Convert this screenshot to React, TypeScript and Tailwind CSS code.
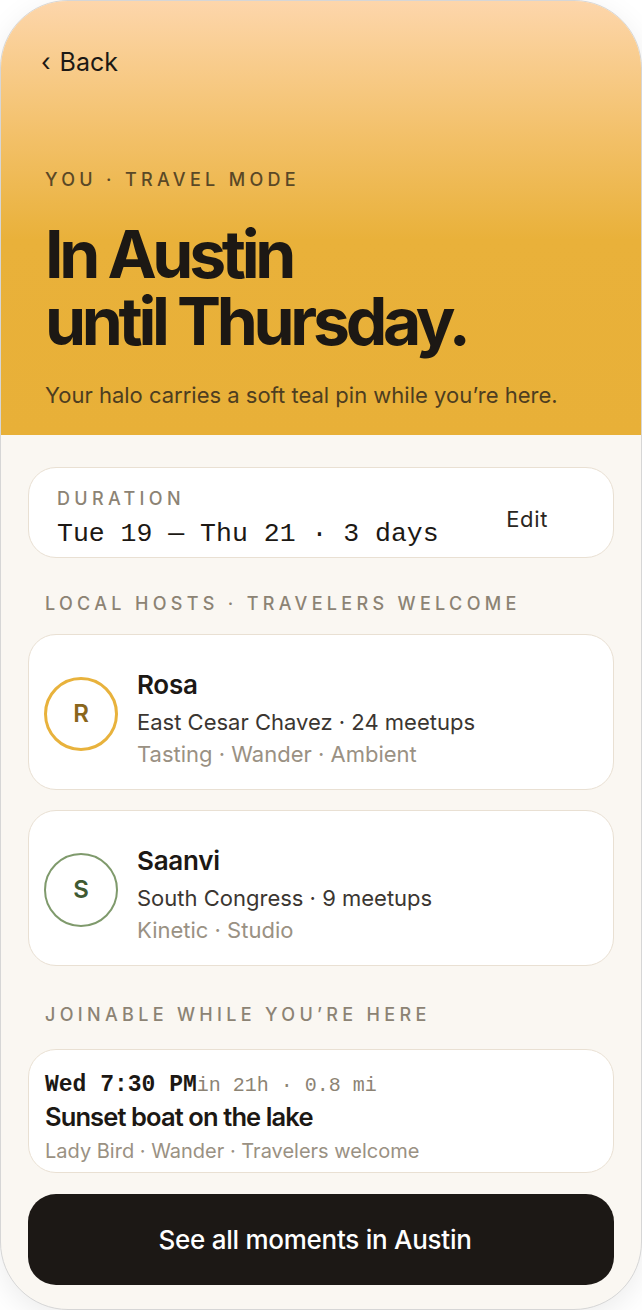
import React from 'react';

interface Host {
  initial: string;
  name: string;
  area: string;
  tags: string;
  ring: string;
  letter: string;
}

const hosts: Host[] = [
  {
    initial: 'R',
    name: 'Rosa',
    area: 'East Cesar Chavez · 24 meetups',
    tags: 'Tasting · Wander · Ambient',
    ring: 'border-[3px] border-[#e8b23c]',
    letter: 'text-[#8a661c]',
  },
  {
    initial: 'S',
    name: 'Saanvi',
    area: 'South Congress · 9 meetups',
    tags: 'Kinetic · Studio',
    ring: 'border-2 border-[#7f9a6c]',
    letter: 'text-[#3f5a32]',
  },
];

const sans = "font-['Inter','Noto_Sans',sans-serif]";
const mono = "font-['Liberation_Mono','DejaVu_Sans_Mono',monospace]";

const App: React.FC = () => {
  return (
    <div className={`w-[642px] h-[1310px] bg-white ${sans}`}>
      <div className="h-full rounded-[68px] overflow-hidden border border-[#d6d6d6] bg-[#faf7f2] shadow-[0_8px_30px_rgba(0,0,0,0.08)] flex flex-col">
        {/* header */}
        <div className="h-[434px] shrink-0 px-[44px] pt-[46px] bg-[linear-gradient(180deg,#fdd6ab_0%,#f3c16b_30%,#e9b13a_55%,#e8b038_100%)]">
          <div className="-ml-[4px] flex items-center text-[25px] leading-[30px] text-[#1c1814]">
            <span className="mr-[9px]">‹</span>
            <span>Back</span>
          </div>
          <div className="mt-[91px] text-[18px] leading-[24px] tracking-[0.24em] text-[#5a4826] font-medium">
            YOU · TRAVEL MODE
          </div>
          <h1 className="mt-[29px] text-[66px] leading-[67px] font-bold tracking-[-0.065em] text-[#1c1814]">
            In Austin
            <br />
            until Thursday.
          </h1>
          <p className="mt-[26px] text-[22px] leading-[28px] text-[#4d3d20]">
            Your halo carries a soft teal pin while you’re here.
          </p>
        </div>

        {/* body */}
        <div className="px-[27px] flex flex-col">
          <div className="mt-[32px] bg-white border border-[#e9e0d3] rounded-[28px] pl-[28px] pr-[65px] pt-[20px] pb-[7px] flex items-center justify-between">
            <div>
              <div className="text-[18px] leading-[22px] tracking-[0.24em] text-[#8c8374] font-medium">DURATION</div>
              <div className={`mt-[8px] text-[26.5px] leading-[32px] text-[#1c1814] ${mono}`}>
                Tue 19 — Thu 21 · 3 days
              </div>
            </div>
            <button className="text-[22px] leading-[28px] tracking-[0.03em] text-[#2a2621]">Edit</button>
          </div>

          <div className="mt-[35px] px-[17px] text-[18px] leading-[22px] tracking-[0.24em] text-[#8c8374] font-medium">
            LOCAL HOSTS · TRAVELERS WELCOME
          </div>

          <div className="mt-[19px] flex flex-col gap-[20px]">
            {hosts.map((h) => (
              <div
                key={h.name}
                className="bg-white border border-[#e9e0d3] rounded-[28px] pl-[15px] pt-[35px] pb-[21px] flex items-center"
              >
                <div
                  className={`w-[74px] h-[74px] rounded-full flex items-center justify-center mb-[10px] shrink-0 ${h.ring}`}
                >
                  <span className={`text-[24px] font-semibold ${h.letter}`}>{h.initial}</span>
                </div>
                <div className="ml-[19px]">
                  <div className="text-[26px] leading-[30px] font-semibold text-[#1c1814] tracking-[-0.01em]">
                    {h.name}
                  </div>
                  <div className="mt-[8px] text-[22px] leading-[28px] text-[#3b3631]">{h.area}</div>
                  <div className="mt-[4px] text-[22px] leading-[28px] text-[#9a9183]">{h.tags}</div>
                </div>
              </div>
            ))}
          </div>

          <div className="mt-[38px] px-[17px] text-[18px] leading-[22px] tracking-[0.24em] text-[#8c8374] font-medium">
            JOINABLE WHILE YOU’RE HERE
          </div>

          <div className="mt-[23px] bg-white border border-[#e9e0d3] rounded-[28px] pl-[16px] pt-[21px] pb-[8px]">
            <div className={`flex items-baseline ${mono}`}>
              <span className="text-[23px] leading-[28px] font-bold text-[#1c1814]">Wed 7:30 PM</span>
              <span className="text-[20px] leading-[28px] text-[#8c8374]">in 21h · 0.8 mi</span>
            </div>
            <div className="mt-[2px] text-[25.5px] leading-[30px] font-semibold tracking-[-0.035em] text-[#1c1814]">
              Sunset boat on the lake
            </div>
            <div className="mt-[6px] text-[20px] leading-[26px] text-[#9a9183]">
              Lady Bird · Wander · Travelers welcome
            </div>
          </div>

          <button className="mt-[21px] h-[91px] rounded-[28px] bg-[#1c1815] text-white text-[26px] tracking-[-0.01em] font-medium pr-[12px]">
            See all moments in Austin
          </button>
        </div>
      </div>
    </div>
  );
};

export default App;
